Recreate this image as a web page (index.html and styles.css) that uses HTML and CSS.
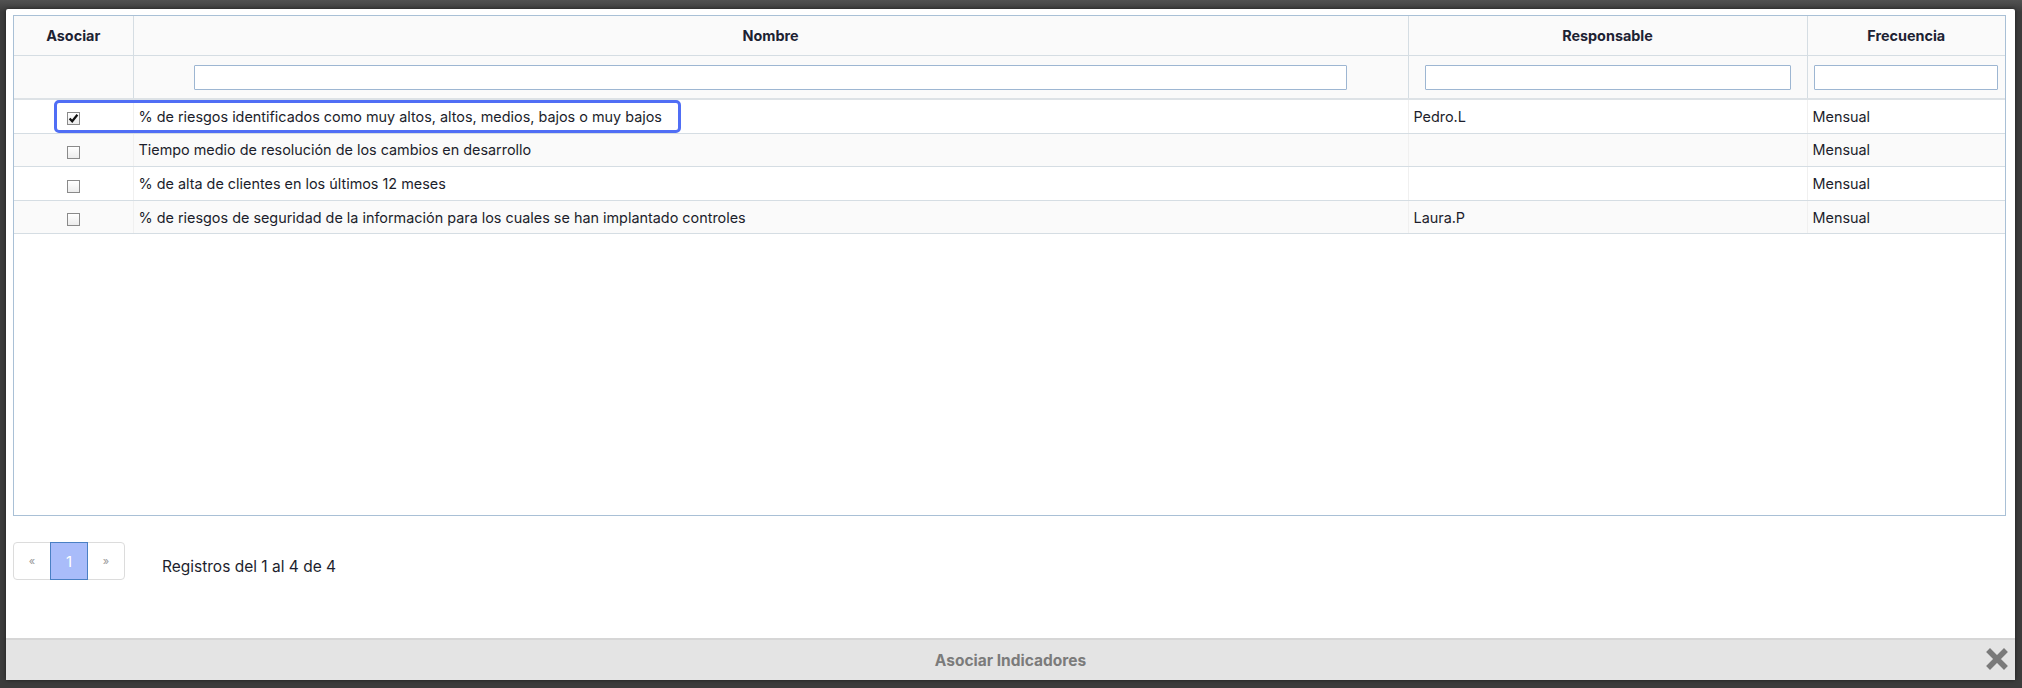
FILE: index.html
```html
<!DOCTYPE html>
<html lang="es">
<head>
    <meta charset="UTF-8">
    <title>Asociar Indicadores</title>
    <link rel="stylesheet" href="styles.css">
</head>
<body>
    <div class="modal">
        <div class="modal-body">
            <div class="grid-wrap">
                <table class="grid">
                    <colgroup>
                        <col class="col-check">
                        <col class="col-name">
                        <col class="col-resp">
                        <col class="col-freq">
                    </colgroup>
                    <thead>
                        <tr class="head-row">
                            <th>Asociar</th>
                            <th>Nombre</th>
                            <th>Responsable</th>
                            <th>Frecuencia</th>
                        </tr>
                        <tr class="filter-row">
                            <th></th>
                            <th><input type="text" class="filter filter-name"></th>
                            <th><input type="text" class="filter filter-resp"></th>
                            <th><input type="text" class="filter filter-freq"></th>
                        </tr>
                    </thead>
                    <tbody>
                        <tr>
                            <td class="cell-check"><span class="check checked"><svg viewBox="0 0 13 13" width="13" height="13"><path d="M2.6 6.4 L5.2 9.2 L10.4 2.8" fill="none" stroke="#111" stroke-width="2.2"/></svg></span></td>
                            <td>% de riesgos identificados como muy altos, altos, medios, bajos o muy bajos</td>
                            <td>Pedro.L</td>
                            <td>Mensual</td>
                        </tr>
                        <tr class="odd">
                            <td class="cell-check"><span class="check"></span></td>
                            <td>Tiempo medio de resolución de los cambios en desarrollo</td>
                            <td></td>
                            <td>Mensual</td>
                        </tr>
                        <tr>
                            <td class="cell-check"><span class="check"></span></td>
                            <td>% de alta de clientes en los últimos 12 meses</td>
                            <td></td>
                            <td>Mensual</td>
                        </tr>
                        <tr class="odd">
                            <td class="cell-check"><span class="check"></span></td>
                            <td>% de riesgos de seguridad de la información para los cuales se han implantado controles</td>
                            <td>Laura.P</td>
                            <td>Mensual</td>
                        </tr>
                    </tbody>
                </table>
                <div class="highlight"></div>
            </div>

            <div class="pager-bar">
                <div class="pager">
                    <span class="page-item">«</span>
                    <span class="page-item active">1</span>
                    <span class="page-item">»</span>
                </div>
                <span class="records">Registros del 1 al 4 de 4</span>
            </div>
        </div>

        <div class="modal-footer">
            <span class="footer-title">Asociar Indicadores</span>
            <span class="close">
                <svg viewBox="0 0 22 22" width="22" height="22"><path d="M4 4 L18 18 M18 4 L4 18" stroke="#7a7a7a" stroke-width="5.5" stroke-linecap="square"/></svg>
            </span>
        </div>
    </div>
</body>
</html>
```

FILE: styles.css
```css
html, body {
    height: 100%;
}

body {
    margin: 0;
    padding: 9px 7px 8px 6px;
    box-sizing: border-box;
    background: linear-gradient(#525252, #3c3c3c 12px, #3c3c3c);
    font-family: Inter, "Open Sans", sans-serif;
    color: #1f2230;
}

.modal {
    height: 671px;
    background: #fff;
    border-radius: 2px;
    display: flex;
    flex-direction: column;
    box-shadow: 0 0 4px rgba(0,0,0,0.5);
}

.modal-body {
    flex: 1;
    padding: 6px 9px 0 7px;
}

.grid-wrap {
    position: relative;
    height: 501px;
    box-sizing: border-box;
    border: 1px solid #a9c0d6;
}

.grid {
    width: 100%;
    border-collapse: collapse;
    table-layout: fixed;
    font-size: 14.4px;
}

.col-check { width: 119px; }
.col-name { width: 1275px; }
.col-resp { width: 399px; }

.grid th {
    background: #fafafa;
    border-right: 1px solid #d5dde3;
    border-bottom: 1px solid #d5dde3;
    font-weight: 700;
    color: #1d2233;
    text-align: center;
}

.grid th:last-child,
.grid td:last-child {
    border-right: none;
}

.head-row th {
    height: 37px;
    font-size: 14.4px;
}

.filter-row th {
    height: 40px;
    border-bottom: 2px solid #dde2e6;
}

.filter {
    display: block;
    margin: 0 auto;
    height: 25px;
    box-sizing: border-box;
    border: 1px solid #9db6d2;
    border-radius: 1px;
    background: #fff;
}

.filter-name { width: 1153px; }
.filter-resp { width: 366px; }
.filter-freq { width: 184px; }

.grid td {
    height: 32.6px;
    padding: 0 0 0 5px;
    border-right: 1px solid #f0f0f0;
    border-bottom: 1px solid #d5dde3;
    background: #fff;
    white-space: nowrap;
    overflow: hidden;
    color: #1c1e2c;
}

.grid tr.odd td {
    background: #fafafa;
}

.grid td.cell-check {
    padding: 0;
    text-align: center;
}

.check {
    display: inline-block;
    width: 13px;
    height: 13px;
    box-sizing: border-box;
    border: 1px solid #8a8a8a;
    background: linear-gradient(#fff, #ececec);
    vertical-align: middle;
    position: relative;
    top: 1px;
}

.check svg {
    display: block;
    margin: -1px;
}

.highlight {
    position: absolute;
    left: 40px;
    top: 84px;
    width: 627px;
    height: 33px;
    box-sizing: border-box;
    border: 3.5px solid #506ef5;
    border-radius: 5px;
}

.pager-bar {
    display: flex;
    align-items: center;
    margin-top: 26px;
}

.pager {
    display: flex;
    border: 1px solid #dcdcdc;
    border-radius: 4px;
    height: 38px;
    box-sizing: border-box;
}

.page-item {
    width: 36px;
    display: flex;
    align-items: center;
    justify-content: center;
    color: #9a9a9a;
    font-size: 11px;
}

.page-item.active {
    background: #a9bcfa;
    border: 1px solid #4a80c4;
    margin: -1px 0;
    color: #fff;
    font-size: 15px;
}

.records {
    margin-left: 37px;
    margin-top: 11px;
    font-size: 15.5px;
    color: #1d1f2e;
}

.modal-footer {
    height: 42px;
    box-sizing: border-box;
    background: #e4e4e4;
    border-top: 2px solid #d6d6d6;
    display: flex;
    align-items: center;
    justify-content: center;
    position: relative;
}

.footer-title {
    font-weight: 700;
    font-size: 15.5px;
    color: #7b7b7b;
}

.close {
    position: absolute;
    right: 7px;
    top: 8px;
    width: 22px;
    height: 22px;
}

.close svg {
    display: block;
}
```
